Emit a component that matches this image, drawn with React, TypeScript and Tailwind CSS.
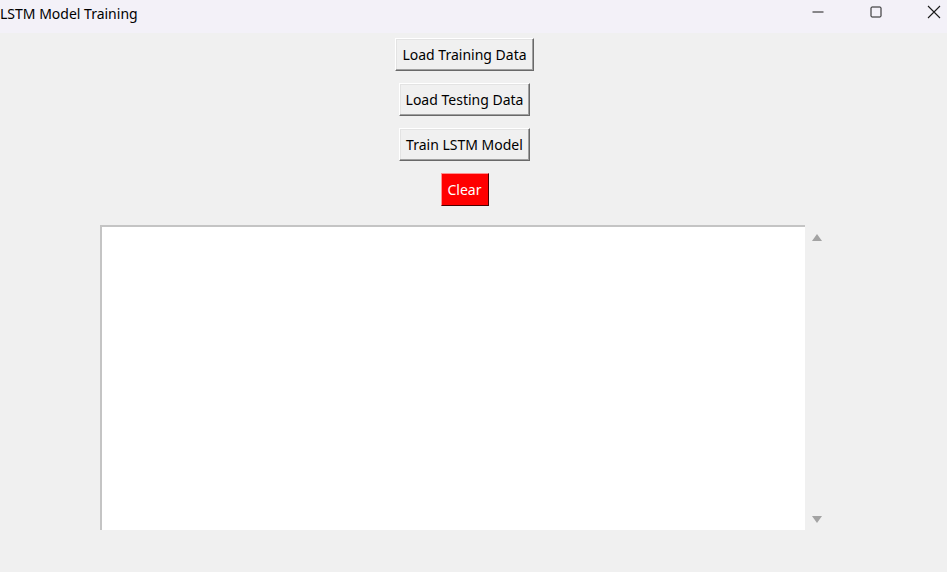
import React from "react"

const font = { fontFamily: '"Noto Sans", "Open Sans", sans-serif' }

function TkButton({ label }: { label: string }) {
  return (
    <button
      className="h-[33px] px-[6px] bg-[#f0f0f0] text-[14px] text-black border border-t-white border-l-white border-r-[#696969] border-b-[#696969] shadow-[inset_-1px_-1px_0_#a0a0a0,inset_1px_1px_0_#e3e3e3]"
    >
      {label}
    </button>
  )
}

export default function App() {
  return (
    <div className="w-[947px] h-[572px] bg-[#f0f0f0] flex flex-col overflow-hidden" style={font}>
      {/* Title bar */}
      <div className="h-[33px] bg-[#f3f1f8] flex items-center justify-between shrink-0">
        <span className="text-[14px] text-black -mt-[7px]">LSTM Model Training</span>
        <div className="flex items-start h-full">
          <div className="w-[58px] h-full flex items-center justify-center -mt-[5px]">
            <svg width="12" height="12" viewBox="0 0 12 12">
              <line x1="0.5" y1="6" x2="11.5" y2="6" stroke="#1a1a1a" strokeWidth="1" />
            </svg>
          </div>
          <div className="w-[58px] h-full flex items-center justify-center -mt-[5px]">
            <svg width="12" height="12" viewBox="0 0 12 12">
              <rect x="1" y="1" width="10" height="10" rx="1" fill="none" stroke="#1a1a1a" strokeWidth="1" />
            </svg>
          </div>
          <div className="w-[58px] h-full flex items-center justify-center -mt-[5px] -mr-[16px]">
            <svg width="14" height="14" viewBox="0 0 14 14">
              <path d="M1 1 L13 13 M13 1 L1 13" stroke="#1a1a1a" strokeWidth="1.1" />
            </svg>
          </div>
        </div>
      </div>

      {/* Body */}
      <div className="ml-[100px] w-[729px] flex flex-col items-center">
        <div className="mt-[5px] flex flex-col items-center gap-[12px]">
          <TkButton label="Load Training Data" />
          <TkButton label="Load Testing Data" />
          <TkButton label="Train LSTM Model" />
          <button className="h-[33px] px-[6px] bg-[#ff0000] text-white text-[14px] border border-t-[#ff9090] border-l-[#ff9090] border-r-[#4a0000] border-b-[#4a0000]">
            Clear
          </button>
        </div>

        <div className="mt-[19px] w-full flex">
          <div className="w-[705px] h-[305px] bg-white border-t-2 border-l-2 border-[#c4c4c4]" />
          <div className="w-[24px] h-[305px] flex flex-col items-center justify-between pt-[9px] pb-[7px]">
            <svg width="10" height="7" viewBox="0 0 10 7">
              <path d="M5 0 L10 7 L0 7 Z" fill="#a3a3a3" />
            </svg>
            <svg width="10" height="7" viewBox="0 0 10 7">
              <path d="M0 0 L10 0 L5 7 Z" fill="#a3a3a3" />
            </svg>
          </div>
        </div>
      </div>
    </div>
  )
}
